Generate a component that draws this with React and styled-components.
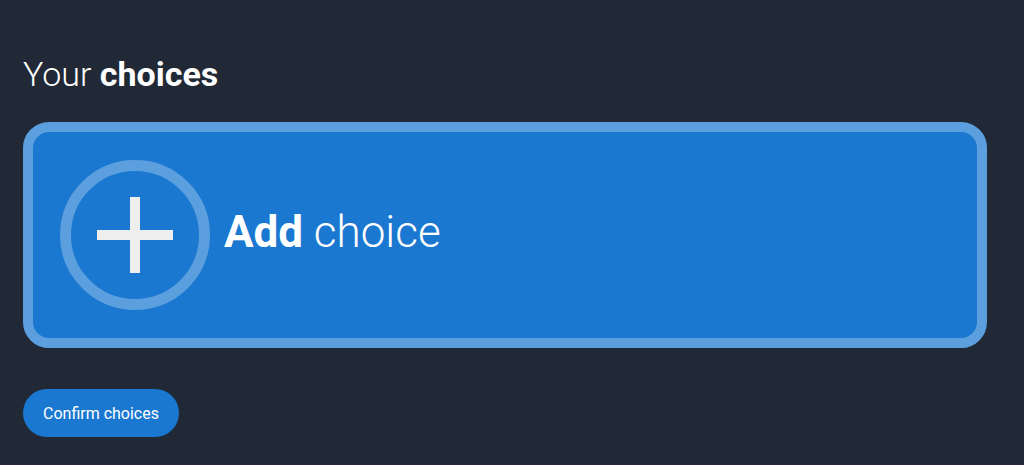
import styled, { createGlobalStyle } from 'styled-components';

const GlobalStyle = createGlobalStyle`
  html, body {
    margin: 0;
    padding: 0;
    background-color: #212936;
  }

  body {
    font-family: Roboto, "Liberation Sans", sans-serif;
    color: #ffffff;
  }
`;

const Page = styled.div`
  min-height: 465px;
  padding: 53px 37px 0 23px;
  box-sizing: border-box;
  display: flex;
  flex-direction: column;
`;

const Title = styled.h1`
  margin: 0;
  font-size: 34px;
  line-height: 42px;
  font-weight: 300;

  strong {
    font-weight: 700;
  }
`;

const AddCard = styled.button`
  margin-top: 27px;
  height: 226px;
  box-sizing: border-box;
  width: 100%;
  display: flex;
  align-items: center;
  gap: 14px;
  padding: 0 0 0 27px;
  background-color: #1a78d1;
  border: 10px solid #5c9fde;
  border-radius: 26px;
  color: #ffffff;
  font: inherit;
  cursor: pointer;
  text-align: left;
`;

const PlusCircle = styled.span`
  flex: none;
  width: 150px;
  height: 150px;
  box-sizing: border-box;
  border: 11px solid #5c9fde;
  border-radius: 50%;
  display: flex;
  align-items: center;
  justify-content: center;
`;

const CardLabel = styled.span`
  font-size: 44px;
  line-height: 52px;
  font-weight: 300;
  margin-top: -6px;

  strong {
    font-weight: 700;
  }
`;

const ConfirmButton = styled.button`
  align-self: flex-start;
  margin-top: 41px;
  height: 48px;
  padding: 0 20px;
  border: none;
  border-radius: 24px;
  background-color: #1a78d1;
  color: #ffffff;
  font-family: Roboto, "Liberation Sans", sans-serif;
  font-size: 16px;
  cursor: pointer;
`;

function PlusIcon() {
  return (
    <svg width="76" height="76" viewBox="0 0 76 76">
      <rect x="33" y="0" width="10" height="76" fill="#eeeeee" />
      <rect x="0" y="33" width="76" height="10" fill="#eeeeee" />
    </svg>
  );
}

export default function App() {
  return (
    <>
      <GlobalStyle />
      <Page>
        <Title>
          Your <strong>choices</strong>
        </Title>
        <AddCard>
          <PlusCircle>
            <PlusIcon />
          </PlusCircle>
          <CardLabel>
            <strong>Add</strong> choice
          </CardLabel>
        </AddCard>
        <ConfirmButton>Confirm choices</ConfirmButton>
      </Page>
    </>
  );
}
